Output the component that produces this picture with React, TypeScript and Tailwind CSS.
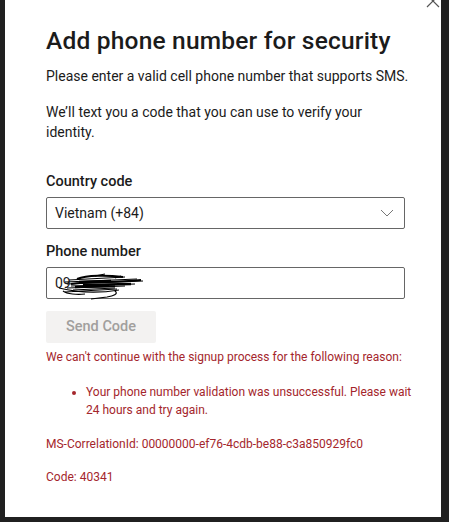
import React from "react";

export default function App() {
  const font = { fontFamily: 'Roboto, "Open Sans", sans-serif' };
  return (
    <div className="w-[449px] h-[522px] bg-[#202020] overflow-hidden" style={font}>
      <div className="relative ml-[5px] w-[436px] h-[517px] bg-white pl-[41px] pr-[16px] pt-[25px] text-[#1b1b1b]">
        <svg className="absolute right-[1px] top-[-6px]" width="14" height="14" viewBox="0 0 14 14">
          <path d="M1 1 L13 13 M13 1 L1 13" stroke="#555" strokeWidth="1.2" fill="none" />
        </svg>
        <h1 className="text-[24.5px] leading-[32px] font-medium tracking-[0.2px] whitespace-nowrap">Add phone number for security</h1>
        <p className="mt-[9px] text-[14px] leading-[20px] whitespace-nowrap">Please enter a valid cell phone number that supports SMS.</p>
        <p className="mt-[16px] text-[14px] leading-[20px] whitespace-nowrap">
          We’ll text you a code that you can use to verify your
          <br />
          identity.
        </p>
        <div className="mt-[30px] text-[14.5px] leading-[20px] font-medium">Country code</div>
        <div className="mt-[5px] w-[359px] h-[32px] border border-[#666] rounded-[2px] flex items-center justify-between pl-[8px] pr-[10px]">
          <span className="text-[14px]">Vietnam (+84)</span>
          <svg width="14" height="8" viewBox="0 0 14 8">
            <path d="M1 1 L7 7 L13 1" stroke="#777" strokeWidth="1" fill="none" />
          </svg>
        </div>
        <div className="mt-[13px] text-[14.5px] leading-[20px] font-medium">Phone number</div>
        <div className="relative mt-[5px] w-[359px] h-[32px] border border-[#666] rounded-[2px] flex items-center pl-[8px]">
          <span className="text-[14px]">09</span>
          <svg className="absolute left-[8px] top-[4px]" width="96" height="30" viewBox="0 0 96 30">
            <g stroke="#000" fill="none" strokeWidth="1.2">
              <path d="M14 8 L70 5 M10 10 L82 7 M12 12 L88 9 M16 14 L80 12 M12 16 L70 14 M18 18 L60 16" />
              <path d="M22 7 C32 3 52 3 68 5 M16 12 C35 9 55 11 86 8" strokeWidth="2" />
              <path d="M4 16 C20 20 40 22 64 18 M10 20 L62 17 M36 27 L52 25 C58 24 64 22 60 19" />
              <path d="M24 10 L56 9 M28 13 L76 12 M20 15 L60 14" strokeWidth="2.5" />
              <path d="M40 4 L50 2 M60 6 L66 4 M8 19 C12 22 22 23 30 22" />
            </g>
          </svg>
        </div>
        <button className="block mt-[12px] w-[110px] h-[32px] bg-[#f3f2f1] rounded-[2px] text-[#a19f9d] text-[14.5px] font-medium">Send Code</button>
        <div className="text-[#a4262c] text-[12px] leading-[18px]">
          <p className="mt-[5px] whitespace-nowrap">We can't continue with the signup process for the following reason:</p>
          <ul className="mt-[17px] pl-[40px] list-disc">
            <li className="whitespace-nowrap">
              Your phone number validation was unsuccessful. Please wait
              <br />
              24 hours and try again.
            </li>
          </ul>
          <p className="mt-[16px] whitespace-nowrap">MS-CorrelationId: 00000000-ef76-4cdb-be88-c3a850929fc0</p>
          <p className="mt-[15px]">Code: 40341</p>
        </div>
      </div>
    </div>
  );
}
